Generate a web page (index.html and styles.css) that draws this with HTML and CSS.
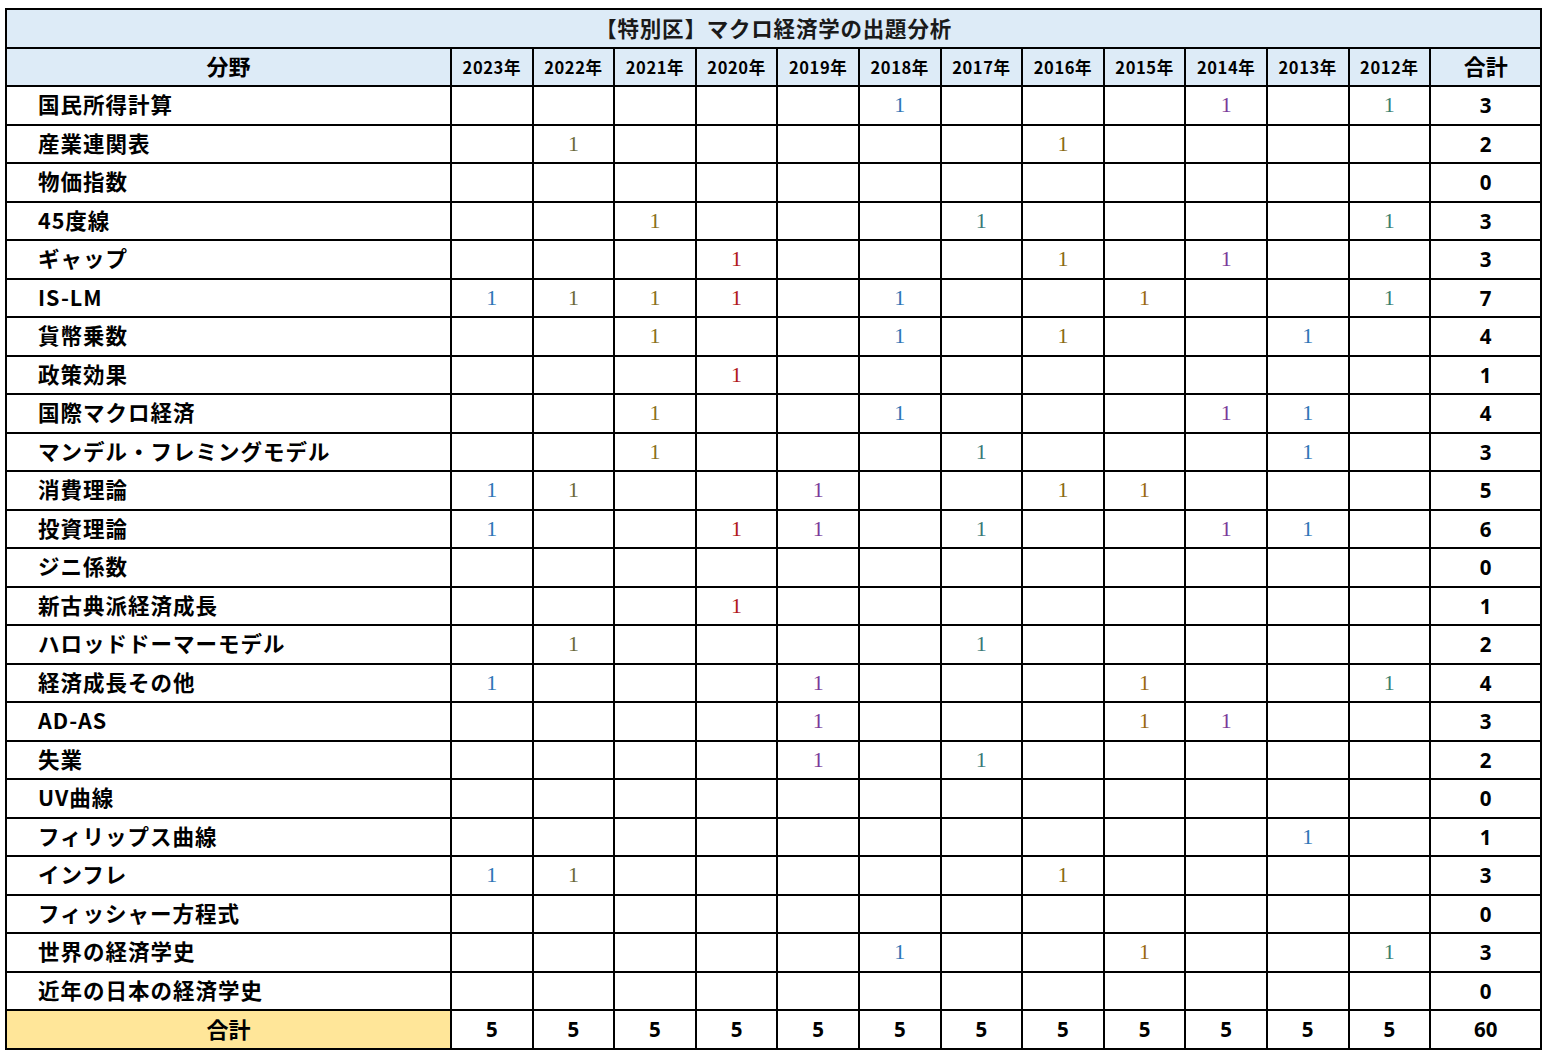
FILE: index.html
```html
<!DOCTYPE html>
<html lang="ja">
<head>
<meta charset="utf-8">
<title>【特別区】マクロ経済学の出題分析</title>
<link rel="stylesheet" href="styles.css">
</head>
<body>
<table class="grid">
<colgroup>
<col class="c-label">
<col class="c-year"><col class="c-year"><col class="c-year"><col class="c-year"><col class="c-year"><col class="c-year">
<col class="c-year"><col class="c-year"><col class="c-year"><col class="c-year"><col class="c-year"><col class="c-year">
<col class="c-sum">
</colgroup>
<thead>
<tr class="title-row"><th colspan="14">【特別区】マクロ経済学の出題分析</th></tr>
<tr class="head-row">
<th class="h-label">分野</th>
<th class="h-year">2023年</th><th class="h-year">2022年</th><th class="h-year">2021年</th><th class="h-year">2020年</th><th class="h-year">2019年</th><th class="h-year">2018年</th>
<th class="h-year">2017年</th><th class="h-year">2016年</th><th class="h-year">2015年</th><th class="h-year">2014年</th><th class="h-year">2013年</th><th class="h-year">2012年</th>
<th class="h-sum">合計</th>
</tr>
</thead>
<tbody>
<tr><td class="lbl">国民所得計算</td><td></td><td></td><td></td><td></td><td></td><td class="n">1</td><td></td><td></td><td></td><td class="n">1</td><td></td><td class="n">1</td><td class="sum">3</td></tr>
<tr><td class="lbl">産業連関表</td><td></td><td class="n">1</td><td></td><td></td><td></td><td></td><td></td><td class="n">1</td><td></td><td></td><td></td><td></td><td class="sum">2</td></tr>
<tr><td class="lbl">物価指数</td><td></td><td></td><td></td><td></td><td></td><td></td><td></td><td></td><td></td><td></td><td></td><td></td><td class="sum">0</td></tr>
<tr><td class="lbl">45度線</td><td></td><td></td><td class="n">1</td><td></td><td></td><td></td><td class="n">1</td><td></td><td></td><td></td><td></td><td class="n">1</td><td class="sum">3</td></tr>
<tr><td class="lbl">ギャップ</td><td></td><td></td><td></td><td class="n">1</td><td></td><td></td><td></td><td class="n">1</td><td></td><td class="n">1</td><td></td><td></td><td class="sum">3</td></tr>
<tr><td class="lbl">IS-LM</td><td class="n">1</td><td class="n">1</td><td class="n">1</td><td class="n">1</td><td></td><td class="n">1</td><td></td><td></td><td class="n">1</td><td></td><td></td><td class="n">1</td><td class="sum">7</td></tr>
<tr><td class="lbl">貨幣乗数</td><td></td><td></td><td class="n">1</td><td></td><td></td><td class="n">1</td><td></td><td class="n">1</td><td></td><td></td><td class="n">1</td><td></td><td class="sum">4</td></tr>
<tr><td class="lbl">政策効果</td><td></td><td></td><td></td><td class="n">1</td><td></td><td></td><td></td><td></td><td></td><td></td><td></td><td></td><td class="sum">1</td></tr>
<tr><td class="lbl">国際マクロ経済</td><td></td><td></td><td class="n">1</td><td></td><td></td><td class="n">1</td><td></td><td></td><td></td><td class="n">1</td><td class="n">1</td><td></td><td class="sum">4</td></tr>
<tr><td class="lbl">マンデル・フレミングモデル</td><td></td><td></td><td class="n">1</td><td></td><td></td><td></td><td class="n">1</td><td></td><td></td><td></td><td class="n">1</td><td></td><td class="sum">3</td></tr>
<tr><td class="lbl">消費理論</td><td class="n">1</td><td class="n">1</td><td></td><td></td><td class="n">1</td><td></td><td></td><td class="n">1</td><td class="n">1</td><td></td><td></td><td></td><td class="sum">5</td></tr>
<tr><td class="lbl">投資理論</td><td class="n">1</td><td></td><td></td><td class="n">1</td><td class="n">1</td><td></td><td class="n">1</td><td></td><td></td><td class="n">1</td><td class="n">1</td><td></td><td class="sum">6</td></tr>
<tr><td class="lbl">ジニ係数</td><td></td><td></td><td></td><td></td><td></td><td></td><td></td><td></td><td></td><td></td><td></td><td></td><td class="sum">0</td></tr>
<tr><td class="lbl">新古典派経済成長</td><td></td><td></td><td></td><td class="n">1</td><td></td><td></td><td></td><td></td><td></td><td></td><td></td><td></td><td class="sum">1</td></tr>
<tr><td class="lbl">ハロッドドーマーモデル</td><td></td><td class="n">1</td><td></td><td></td><td></td><td></td><td class="n">1</td><td></td><td></td><td></td><td></td><td></td><td class="sum">2</td></tr>
<tr><td class="lbl">経済成長その他</td><td class="n">1</td><td></td><td></td><td></td><td class="n">1</td><td></td><td></td><td></td><td class="n">1</td><td></td><td></td><td class="n">1</td><td class="sum">4</td></tr>
<tr><td class="lbl">AD-AS</td><td></td><td></td><td></td><td></td><td class="n">1</td><td></td><td></td><td></td><td class="n">1</td><td class="n">1</td><td></td><td></td><td class="sum">3</td></tr>
<tr><td class="lbl">失業</td><td></td><td></td><td></td><td></td><td class="n">1</td><td></td><td class="n">1</td><td></td><td></td><td></td><td></td><td></td><td class="sum">2</td></tr>
<tr><td class="lbl">UV曲線</td><td></td><td></td><td></td><td></td><td></td><td></td><td></td><td></td><td></td><td></td><td></td><td></td><td class="sum">0</td></tr>
<tr><td class="lbl">フィリップス曲線</td><td></td><td></td><td></td><td></td><td></td><td></td><td></td><td></td><td></td><td></td><td class="n">1</td><td></td><td class="sum">1</td></tr>
<tr><td class="lbl">インフレ</td><td class="n">1</td><td class="n">1</td><td></td><td></td><td></td><td></td><td></td><td class="n">1</td><td></td><td></td><td></td><td></td><td class="sum">3</td></tr>
<tr><td class="lbl">フィッシャー方程式</td><td></td><td></td><td></td><td></td><td></td><td></td><td></td><td></td><td></td><td></td><td></td><td></td><td class="sum">0</td></tr>
<tr><td class="lbl">世界の経済学史</td><td></td><td></td><td></td><td></td><td></td><td class="n">1</td><td></td><td></td><td class="n">1</td><td></td><td></td><td class="n">1</td><td class="sum">3</td></tr>
<tr><td class="lbl">近年の日本の経済学史</td><td></td><td></td><td></td><td></td><td></td><td></td><td></td><td></td><td></td><td></td><td></td><td></td><td class="sum">0</td></tr>
</tbody>
<tfoot>
<tr class="total-row"><td class="t-label">合計</td><td class="t">5</td><td class="t">5</td><td class="t">5</td><td class="t">5</td><td class="t">5</td><td class="t">5</td><td class="t">5</td><td class="t">5</td><td class="t">5</td><td class="t">5</td><td class="t">5</td><td class="t">5</td><td class="t">60</td></tr>
</tfoot>
</table>
</body>
</html>
```
FILE: styles.css
```css
html, body {
  margin: 0;
  padding: 0;
  background: #ffffff;
}
body {
  padding: 8px 0 0 5px;
  font-family: "Noto Sans CJK JP", "Noto Sans", sans-serif;
  color: #000;
}
.grid {
  border-collapse: collapse;
  table-layout: fixed;
  width: 1537px;
}
.c-label { width: 445px; }
.c-year { width: 81.6px; }
.c-sum { width: 111px; }

.grid th, .grid td {
  border: 2px solid #000;
  padding: 0;
  height: 36.5px;
  line-height: 1;
  vertical-align: middle;
  text-align: center;
  overflow: hidden;
  white-space: nowrap;
}
.title-row th {
  background: #ddebf7;
  font-size: 21.5px;
  font-weight: 600;
  letter-spacing: 0.8px;
  color: #1a1a1a;
  height: 34.5px;
  padding-bottom: 2px;
}
.head-row th {
  background: #ddebf7;
}
.grid .h-label, .grid .h-sum {
  font-size: 22px;
  font-weight: 600;
  height: 33.5px;
  padding-bottom: 3px;
}
.h-year {
  font-size: 16.5px;
  font-weight: 700;
  letter-spacing: 0.6px;
}
.grid .lbl {
  text-align: left;
  padding-left: 31px;
  padding-bottom: 3px;
  height: 33.5px;
  font-size: 21.5px;
  font-weight: 600;
  letter-spacing: 1px;
}
.n {
  font-family: "Liberation Serif", "DejaVu Serif", serif;
  font-size: 22px;
}
.sum, .t {
  font-family: "Noto Sans", "Liberation Sans", sans-serif;
  font-size: 20.5px;
  font-weight: 700;
}
.grid .t-label {
  background: #ffe699;
  font-size: 22px;
  font-weight: 600;
  height: 33.5px;
  padding-bottom: 3px;
}
tbody td.n:nth-child(2) { color: #2e75b6; }
tbody td.n:nth-child(3) { color: #6b6a3a; }
tbody td.n:nth-child(4) { color: #8a7020; }
tbody td.n:nth-child(5) { color: #b01818; }
tbody td.n:nth-child(6) { color: #7a3a9a; }
tbody td.n:nth-child(7) { color: #2e75b6; }
tbody td.n:nth-child(8) { color: #3a7a78; }
tbody td.n:nth-child(9) { color: #8a6a10; }
tbody td.n:nth-child(10) { color: #9a6a10; }
tbody td.n:nth-child(11) { color: #7a3a9a; }
tbody td.n:nth-child(12) { color: #2e75b6; }
tbody td.n:nth-child(13) { color: #3a8070; }
```
